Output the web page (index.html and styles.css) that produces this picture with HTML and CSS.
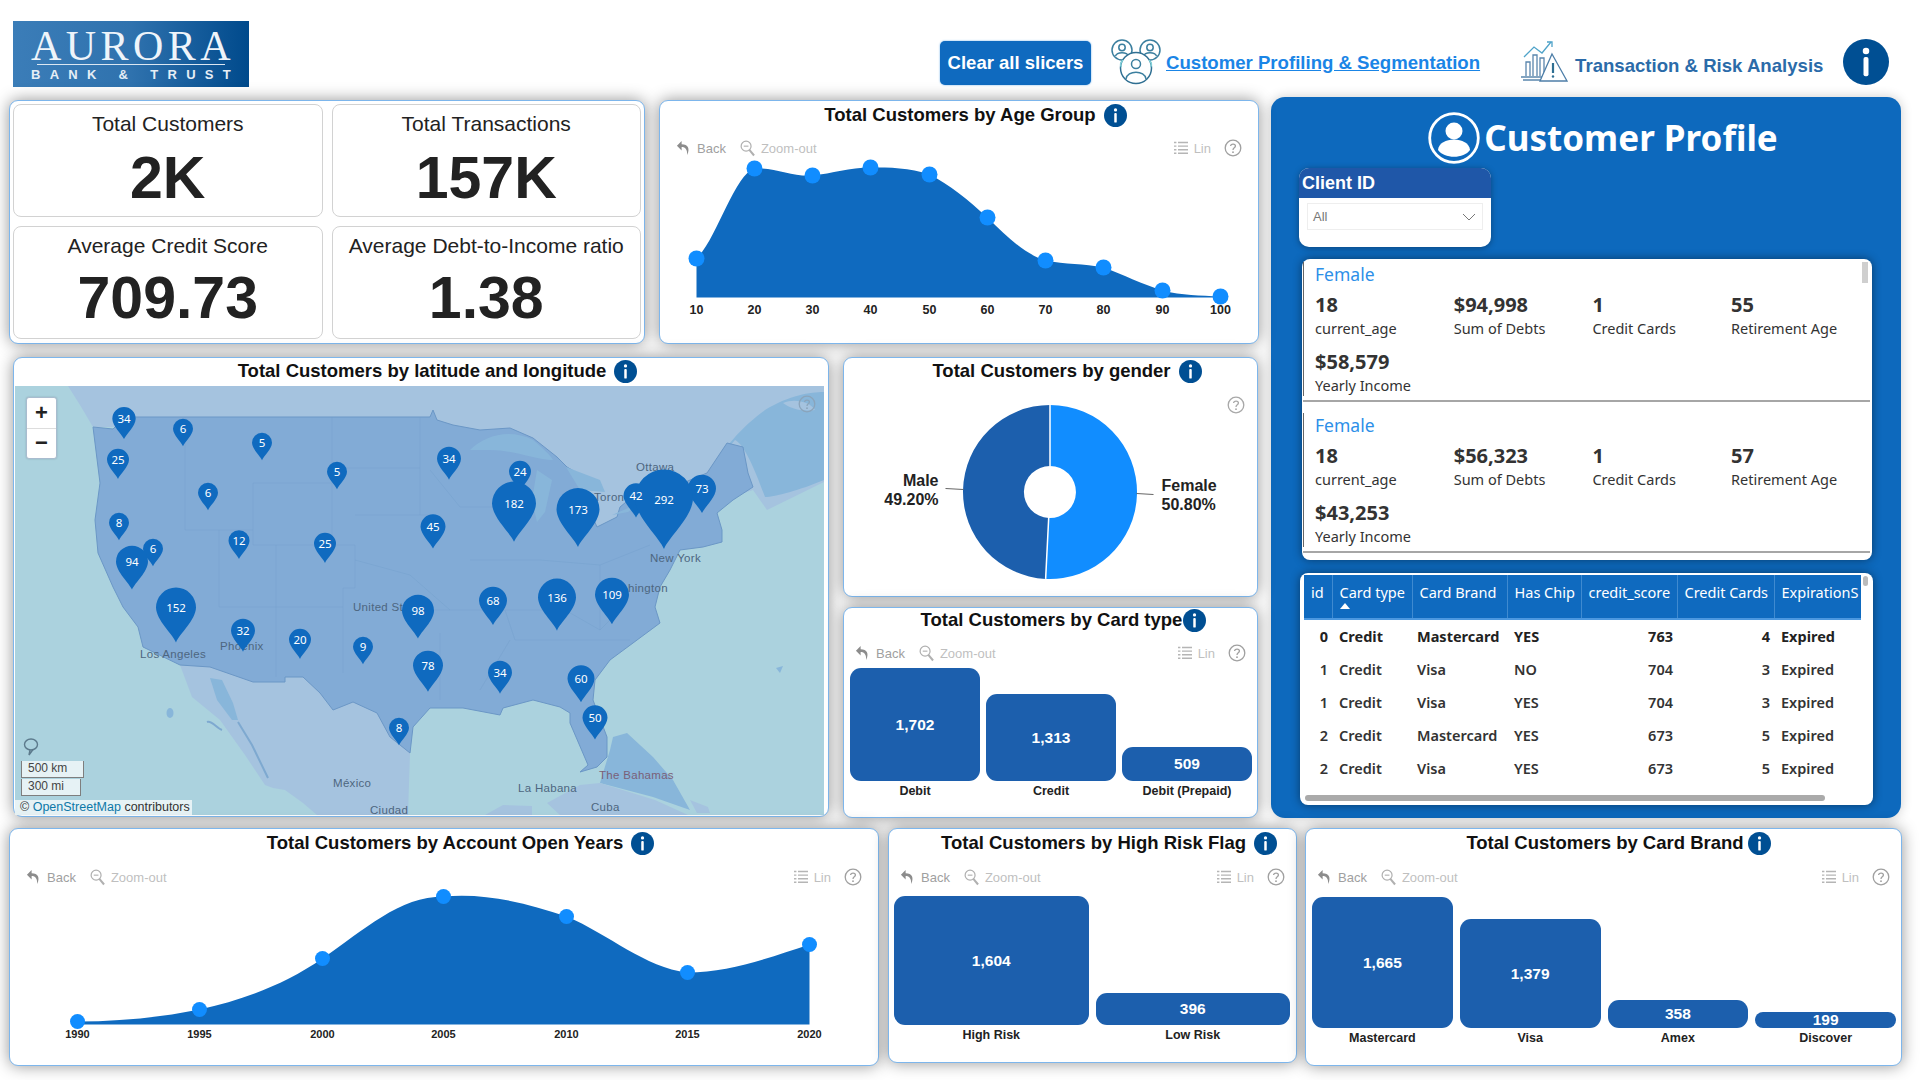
FILE: index.html
```html
<!DOCTYPE html>
<html lang="en">
<head>
<meta charset="utf-8">
<title>Aurora Bank &amp; Trust - Customer Profiling</title>
<link rel="stylesheet" href="styles.css">
</head>
<body>
<svg class="sprite" aria-hidden="true">
  <symbol id="i-back" viewBox="0 0 16 18"><path d="M6 1 L1 6 L6 11 V7.5 C10 7.5 12 10 12 16 C15 9 13 4.5 6 4.5Z" fill="currentColor"/></symbol>
  <symbol id="i-zoom" viewBox="0 0 16 18"><circle cx="6.5" cy="6.5" r="5.3" fill="none" stroke="currentColor" stroke-width="1.3"/><path d="M4 6.5H9" stroke="currentColor" stroke-width="1.2"/><path d="M10 10.5L15 16.5" stroke="currentColor" stroke-width="2.2"/></symbol>
  <symbol id="i-list" viewBox="0 0 14 16"><path d="M4 2H14M4 5.6H14M4 9.2H14M4 12.8H14" stroke="currentColor" stroke-width="1.4"/><path d="M0 2H2.4M0 5.6H2.4M0 9.2H2.4M0 12.8H2.4" stroke="currentColor" stroke-width="1.4"/></symbol>
  <symbol id="i-help" viewBox="0 0 18 18"><circle cx="9" cy="9" r="7.8" fill="none" stroke="currentColor" stroke-width="1.3"/><path d="M6.6 7C6.8 4.4 11.4 4.4 11.4 7C11.4 8.8 9 8.8 9 11" fill="none" stroke="currentColor" stroke-width="1.3"/><circle cx="9" cy="13.2" r=".9" fill="currentColor"/></symbol>
  <symbol id="i-info" viewBox="0 0 24 24"><circle cx="12" cy="12" r="12" fill="#004f93"/><circle cx="12" cy="6.2" r="1.7" fill="#fff"/><rect x="10.7" y="9.4" width="2.6" height="10" rx="1" fill="#fff"/></symbol>
  <symbol id="pin" viewBox="-1 -1 2 2.8" overflow="visible"><path d="M0 1.72 C-.18 1.3 -.98 .62 -1 -.02 A1 1 0 1 1 1 -.02 C.98 .62 .18 1.3 0 1.72Z"/></symbol>
</svg>

<div class="page">
  <header class="top">
    <div class="logo">
      <div class="logo-name">AURORA</div>
      <div class="logo-rule"></div>
      <div class="logo-sub">BANK &amp; TRUST</div>
    </div>
    <button class="clear-btn">Clear all slicers</button>
    <svg class="nav-ic-a" viewBox="0 0 51 46" fill="none" stroke="#3b7f9f" stroke-width="1.5">
      <circle cx="11" cy="11" r="10"/><circle cx="11" cy="8.5" r="3.2"/><path d="M4.5 17C6 12.5 16 12.5 17.5 17"/>
      <circle cx="39" cy="11" r="10"/><circle cx="39" cy="8.5" r="3.2"/><path d="M32.500 17C34 12.5 44 12.500 45.500 17"/>
      <circle cx="25" cy="29" r="15.500" fill="#fff" stroke="#2f6f92"/><circle cx="25" cy="25" r="4.500"/><path d="M15 40C16 31 34 31 35 40"/>
      <path d="M12 21C9 24 9 26 10.500 28M38 21C41 24 41 26 39.500 28" stroke="#7fd0d8"/>
    </svg>
    <a class="nav-link" href="#">Customer Profiling &amp; Segmentation</a>
    <svg class="nav-ic-b" viewBox="0 0 48 42" fill="none" stroke="#5a86ad" stroke-width="1.3">
      <path d="M1 37H28M3 40H28"/><path d="M6 36V22H10V36M13 36V15H17V36M20 36V18H24V36"/>
      <path d="M4 17L14 7L22 13L31 2" stroke="#4fa3c9"/><path d="M27 2H32V7" stroke="#4fa3c9"/>
      <path d="M32 14L47 41H20Z" fill="#fff" stroke="#4d7ea8"/><path d="M33 23V33" stroke="#2f6f92" stroke-width="2.200"/><circle cx="33" cy="36.500" r="1.200" fill="#2f6f92" stroke="none"/>
    </svg>
    <span class="nav-text">Transaction &amp; Risk Analysis</span>
    <svg class="nav-info"><use href="#i-info"/></svg>
  </header>

  <main class="middle">
    <div class="left">
      <div class="row-one">
        <section class="panel kpis">
          <div class="kpi"><div class="kpi-label">Total Customers</div><div class="kpi-value">2K</div></div>
          <div class="kpi"><div class="kpi-label">Total Transactions</div><div class="kpi-value">157K</div></div>
          <div class="kpi"><div class="kpi-label">Average Credit Score</div><div class="kpi-value kpi-value-low">709.73</div></div>
          <div class="kpi"><div class="kpi-label">Average Debt-to-Income ratio</div><div class="kpi-value kpi-value-low">1.38</div></div>
        </section>

        <section class="panel age">
          <h2 class="title">Total Customers by Age Group <svg class="info"><use href="#i-info"/></svg></h2>
          <div class="toolbar">
            <svg class="tb-ic tb-back"><use href="#i-back"/></svg><span class="tb-t tb-t-back">Back</span>
            <svg class="tb-ic tb-zoom"><use href="#i-zoom"/></svg><span class="tb-t">Zoom-out</span>
            <svg class="tb-ic tb-list"><use href="#i-list"/></svg><span class="tb-t">Lin</span>
            <svg class="tb-help"><use href="#i-help"/></svg>
          </div>
          <svg class="chart age-chart" viewBox="660.5 159.5 597 179">
            <path class="area" d="M697 298V259C717 240 735 175 755 169C775 168 795 178 813 176C833 174 850 168 871 168C890 168 910 168 930 175C950 185 968 200 988 218C1008 238 1026 255 1046 261C1066 265 1084 264 1104 268C1124 275 1143 285 1163 291C1183 296 1200 296 1221 297V298Z"/>
            <g class="dots"><circle cx="697" cy="259" r="8"/><circle cx="755" cy="169" r="8"/><circle cx="813" cy="176" r="8"/><circle cx="871" cy="168" r="8"/><circle cx="930" cy="175" r="8"/><circle cx="988" cy="218" r="8"/><circle cx="1046" cy="261" r="8"/><circle cx="1104" cy="268" r="8"/><circle cx="1163" cy="291" r="8"/><circle cx="1221" cy="297" r="8"/></g>
            <g class="axis"><text x="697" y="314">10</text><text x="755" y="314">20</text><text x="813" y="314">30</text><text x="871" y="314">40</text><text x="930" y="314">50</text><text x="988" y="314">60</text><text x="1046" y="314">70</text><text x="1104" y="314">80</text><text x="1163" y="314">90</text><text x="1221" y="314">100</text></g>
          </svg>
        </section>
      </div>

      <div class="row-two">
        <section class="panel map-panel">
          <h2 class="title title-up">Total Customers by latitude and longitude <svg class="info"><use href="#i-info"/></svg></h2>
          <div class="map">
            <svg class="map-svg" viewBox="15 386 809 429">
              <rect x="15" y="386" width="809" height="429" fill="#abd2de"/>
              <path class="land" d="M68 386L80 405L93 427H125L600 540L753 490L767 510L824 482V386Z"/>
              <path class="shelf" d="M710 470C730 440 745 425 765 410C790 395 810 392 824 392V480C800 490 775 497 765 497C755 470 745 445 735 440Z"/>
              <path class="lake" d="M783 403C795 398 810 402 815 410C800 412 790 408 783 403Z"/>
              <path class="land" d="M180 665L192 697L220 720L245 755L265 785L273 788L285 790L303 803L317 815H408L410 753L400 700L250 660Z"/>
              <path class="shelf" d="M210 678L222 680L233 703L238 720L232 720L217 700Z"/>
              <path class="coastline" d="M238 722L252 745L268 778M207 722C212 720 216 728 222 730"/>
              <path class="land" d="M485 815L503 805L532 806V815Z"/>
              <path class="shelf" d="M613 737L627 733L653 757L673 780L690 810L653 797L600 783L610 750Z"/>
              <path class="land" d="M547 803L580 785L600 783L655 800L688 815H560Z"/>
              <path class="land" d="M690 800L708 807L710 813H697Z"/>
              <ellipse class="shelf" cx="170" cy="713" rx="3.500" ry="5"/>
              <path class="shelf" d="M776 668L783 666L780 673Z"/>
              <path class="us" d="M93 427L113 429L125 417H430L433 410L437 420L453 425L480 430L510 428L533 438L557 457L567 467L577 473L580 488L597 527L617 517L620 507L637 493L653 483H683L707 473L727 443L743 447L748 473L753 487L733 500L717 513L722 530L722 542L703 547L680 550L670 570L660 587L655 607L660 623L633 643L610 660L595 680L593 700L607 737L607 757L597 767L580 772L588 765L570 723L570 713L560 707L533 700L503 708L500 715L463 708L440 708H430L413 727L410 753L390 737L377 713L353 702L333 710L320 693L303 677H285V682H253L210 667L180 665L143 647L138 627L123 607L113 587L98 553L95 520L100 483Z"/>
              <path class="shelf" d="M470 450C485 435 510 428 533 440C545 450 550 455 553 460C535 460 515 450 490 450Z"/>
              <path class="shelf" d="M537 470L552 480L545 512L537 522L532 500Z"/>
              <path class="shelf" d="M566 467L600 480L605 492L580 490Z"/>
              <path class="shelf" d="M612 515L640 503L628 512Z"/>
              <path class="states" d="M185 417V530H253M253 483H332V417M253 483V545H355V588H343V673M219 530V607H343M276 545V677M332 483V545M333 468H420M355 515H430M355 560L410 575L450 610M420 417V515M430 470L460 507L520 507M470 560H540M540 560L600 565L650 545M430 610H565M515 640H630M510 640L480 690M440 633V700M505 610L515 640M600 565L600 630M565 610L600 630L620 610"/>
              <text class="place" x="140" y="658">Los Angeles</text>
              <text class="place" x="220" y="650">Phoenix</text>
              <text class="place" x="353" y="611">United St</text>
              <text class="place" x="636" y="471">Ottawa</text>
              <text class="place" x="594" y="501">Toron</text>
              <text class="place" x="650" y="562">New York</text>
              <text class="place" x="628" y="592">hington</text>
              <text class="place" x="333" y="787">México</text>
              <text class="place" x="370" y="814">Ciudad</text>
              <text class="place" x="518" y="792">La Habana</text>
              <text class="place place-red" x="599" y="779">The Bahamas</text>
              <text class="place" x="591" y="811">Cuba</text>
              <g class="pins">
                <use href="#pin" x="-1" y="-1" width="2" height="2.800" transform="translate(124 419) scale(11.700)"/><text x="124" y="423">34</text>
                <use href="#pin" x="-1" y="-1" width="2" height="2.800" transform="translate(183 429) scale(10)"/><text x="183" y="433">6</text>
                <use href="#pin" x="-1" y="-1" width="2" height="2.800" transform="translate(262 443) scale(10)"/><text x="262" y="447">5</text>
                <use href="#pin" x="-1" y="-1" width="2" height="2.800" transform="translate(337 472) scale(10)"/><text x="337" y="476">5</text>
                <use href="#pin" x="-1" y="-1" width="2" height="2.800" transform="translate(118 460) scale(11)"/><text x="118" y="464">25</text>
                <use href="#pin" x="-1" y="-1" width="2" height="2.800" transform="translate(208 493) scale(10)"/><text x="208" y="497">6</text>
                <use href="#pin" x="-1" y="-1" width="2" height="2.800" transform="translate(119 523) scale(10)"/><text x="119" y="527">8</text>
                <use href="#pin" x="-1" y="-1" width="2" height="2.800" transform="translate(239 541) scale(10.500)"/><text x="239" y="545">12</text>
                <use href="#pin" x="-1" y="-1" width="2" height="2.800" transform="translate(325 544) scale(11)"/><text x="325" y="548">25</text>
                <use href="#pin" x="-1" y="-1" width="2" height="2.800" transform="translate(153 549) scale(10)"/><text x="153" y="553">6</text>
                <use href="#pin" x="-1" y="-1" width="2" height="2.800" transform="translate(132 562) scale(16)"/><text x="132" y="566">94</text>
                <use href="#pin" x="-1" y="-1" width="2" height="2.800" transform="translate(176 608) scale(20)"/><text x="176" y="612">152</text>
                <use href="#pin" x="-1" y="-1" width="2" height="2.800" transform="translate(243 631) scale(12)"/><text x="243" y="635">32</text>
                <use href="#pin" x="-1" y="-1" width="2" height="2.800" transform="translate(300 640) scale(11)"/><text x="300" y="644">20</text>
                <use href="#pin" x="-1" y="-1" width="2" height="2.800" transform="translate(363 647) scale(10)"/><text x="363" y="651">9</text>
                <use href="#pin" x="-1" y="-1" width="2" height="2.800" transform="translate(418 611) scale(16)"/><text x="418" y="615">98</text>
                <use href="#pin" x="-1" y="-1" width="2" height="2.800" transform="translate(399 728) scale(10)"/><text x="399" y="732">8</text>
                <use href="#pin" x="-1" y="-1" width="2" height="2.800" transform="translate(428 666) scale(15)"/><text x="428" y="670">78</text>
                <use href="#pin" x="-1" y="-1" width="2" height="2.800" transform="translate(449 459) scale(12)"/><text x="449" y="463">34</text>
                <use href="#pin" x="-1" y="-1" width="2" height="2.800" transform="translate(433 527) scale(12.500)"/><text x="433" y="531">45</text>
                <use href="#pin" x="-1" y="-1" width="2" height="2.800" transform="translate(520 472) scale(11)"/><text x="520" y="476">24</text>
                <use href="#pin" x="-1" y="-1" width="2" height="2.800" transform="translate(514 504) scale(22)"/><text x="514" y="508">182</text>
                <use href="#pin" x="-1" y="-1" width="2" height="2.800" transform="translate(578 510) scale(21.500)"/><text x="578" y="514">173</text>
                <use href="#pin" x="-1" y="-1" width="2" height="2.800" transform="translate(636 496) scale(12.500)"/>
                <use href="#pin" x="-1" y="-1" width="2" height="2.800" transform="translate(702 489) scale(14)"/><text x="702" y="493">73</text>
                <use href="#pin" x="-1" y="-1" width="2" height="2.800" transform="translate(664 499) scale(29)"/><text x="664" y="504">292</text>
                <text x="636" y="500">42</text>
                <use href="#pin" x="-1" y="-1" width="2" height="2.800" transform="translate(493 601) scale(14)"/><text x="493" y="605">68</text>
                <use href="#pin" x="-1" y="-1" width="2" height="2.800" transform="translate(557 598) scale(19)"/><text x="557" y="602">136</text>
                <use href="#pin" x="-1" y="-1" width="2" height="2.800" transform="translate(612 595) scale(17)"/><text x="612" y="599">109</text>
                <use href="#pin" x="-1" y="-1" width="2" height="2.800" transform="translate(500 673) scale(12)"/><text x="500" y="677">34</text>
                <use href="#pin" x="-1" y="-1" width="2" height="2.800" transform="translate(581 679) scale(13.500)"/><text x="581" y="683">60</text>
                <use href="#pin" x="-1" y="-1" width="2" height="2.800" transform="translate(595 718) scale(12.500)"/><text x="595" y="722">50</text>
              </g>
            </svg>
            <div class="zoom-ctl"><span>+</span><span>−</span></div>
            <svg class="map-help"><use href="#i-help"/></svg>
            <svg class="scale-pin" viewBox="0 0 16 18" fill="none" stroke="#5c7a8c" stroke-width="1.400"><ellipse cx="8" cy="6.500" rx="6.500" ry="5.500"/><path d="M7 12L6 17L10 11.500"/></svg>
            <div class="scale">
              <div class="scale-km">500 km</div>
              <div class="scale-mi">300 mi</div>
            </div>
            <div class="attrib">© <span class="osm">OpenStreetMap</span> contributors</div>
          </div>
        </section>

        <div class="right-col">
          <section class="panel gender">
            <h2 class="title title-up">Total Customers by gender <svg class="info"><use href="#i-info"/></svg></h2>
            <svg class="chart gender-chart" viewBox="844.5 385.5 412 210">
              <path fill="#1c5fad" d="M1050.500 404.500A87 87 0 0 0 1046.130 578.390L1049.190 517.470A26 26 0 0 1 1050.500 465.500Z"/>
              <path fill="#118dff" d="M1050.500 404.500A87 87 0 1 1 1046.130 578.390L1049.190 517.470A26 26 0 1 0 1050.500 465.500Z"/>
              <path d="M1050.500 404.500V465.500M1049.190 517.470L1046.130 578.390" stroke="#fff" stroke-width="1.500"/>
              <path d="M946 488L964 489M1137 493L1154 494" stroke="#666" stroke-width="1"/>
              <g class="pie-label">
                <text x="939" y="485" text-anchor="end">Male</text>
                <text x="939" y="504" text-anchor="end">49.20%</text>
                <text x="1162" y="490">Female</text>
                <text x="1162" y="509">50.80%</text>
              </g>
            </svg>
            <svg class="gender-help"><use href="#i-help"/></svg>
          </section>

          <section class="panel cardtype">
            <h2 class="title title-tight">Total Customers by Card type <svg class="info"><use href="#i-info"/></svg></h2>
            <div class="toolbar toolbar-wide">
              <svg class="tb-ic tb-back"><use href="#i-back"/></svg><span class="tb-t tb-t-back">Back</span>
              <svg class="tb-ic tb-zoom"><use href="#i-zoom"/></svg><span class="tb-t">Zoom-out</span>
              <svg class="tb-ic tb-list"><use href="#i-list"/></svg><span class="tb-t">Lin</span>
              <svg class="tb-help"><use href="#i-help"/></svg>
            </div>
            <div class="bars bars-type">
              <div class="col"><div class="bar" style="height:113px">1,702</div><div class="bar-name">Debit</div></div>
              <div class="col"><div class="bar" style="height:87px">1,313</div><div class="bar-name">Credit</div></div>
              <div class="col"><div class="bar" style="height:34px">509</div><div class="bar-name">Debit (Prepaid)</div></div>
            </div>
          </section>
        </div>
      </div>
    </div>

    <aside class="profile">
      <div class="profile-head">
        <svg class="profile-ic" viewBox="0 0 52 52"><circle cx="26" cy="26" r="24.300" fill="none" stroke="#fff" stroke-width="2.800"/><circle cx="26" cy="19" r="8.500" fill="#fff"/><path d="M10 38C11 24 41 24 42 38C36 47 16 47 10 38Z" fill="#fff"/></svg>
        <h1 class="profile-title">Customer Profile</h1>
      </div>
      <div class="slicer">
        <div class="slicer-head">Client ID</div>
        <div class="slicer-box"><span>All</span><svg class="chev" viewBox="0 0 14 8" fill="none" stroke="#777" stroke-width="1"><path d="M1 1L7 7L13 1"/></svg></div>
      </div>
      <div class="cards">
        <div class="thumb-v"></div>
        <div class="item">
          <div class="item-body">
            <div class="who">Female</div>
            <div class="stats">
              <div class="stat"><b>18</b><span>current_age</span></div>
              <div class="stat"><b>$94,998</b><span>Sum of Debts</span></div>
              <div class="stat"><b>1</b><span>Credit Cards</span></div>
              <div class="stat"><b>55</b><span>Retirement Age</span></div>
              <div class="stat"><b>$58,579</b><span>Yearly Income</span></div>
            </div>
          </div>
        </div>
        <div class="item">
          <div class="item-body">
            <div class="who">Female</div>
            <div class="stats">
              <div class="stat"><b>18</b><span>current_age</span></div>
              <div class="stat"><b>$56,323</b><span>Sum of Debts</span></div>
              <div class="stat"><b>1</b><span>Credit Cards</span></div>
              <div class="stat"><b>57</b><span>Retirement Age</span></div>
              <div class="stat"><b>$43,253</b><span>Yearly Income</span></div>
            </div>
          </div>
        </div>
      </div>
      <div class="table-box">
        <table class="tbl">
          <colgroup><col class="c1"><col class="c2"><col class="c3"><col class="c4"><col class="c5"><col class="c6"><col class="c7"></colgroup>
          <thead><tr><th class="h-id">id</th><th class="sorted">Card type</th><th>Card Brand</th><th>Has Chip</th><th>credit_score</th><th>Credit Cards</th><th>ExpirationS</th></tr></thead>
          <tbody>
            <tr class="strong"><td class="num">0</td><td>Credit</td><td class="brand">Mastercard</td><td>YES</td><td class="num">763</td><td class="num">4</td><td>Expired</td></tr>
            <tr><td class="num">1</td><td>Credit</td><td class="brand">Visa</td><td>NO</td><td class="num">704</td><td class="num">3</td><td>Expired</td></tr>
            <tr><td class="num">1</td><td>Credit</td><td class="brand">Visa</td><td>YES</td><td class="num">704</td><td class="num">3</td><td>Expired</td></tr>
            <tr><td class="num">2</td><td>Credit</td><td class="brand">Mastercard</td><td>YES</td><td class="num">673</td><td class="num">5</td><td>Expired</td></tr>
            <tr><td class="num">2</td><td>Credit</td><td class="brand">Visa</td><td>YES</td><td class="num">673</td><td class="num">5</td><td>Expired</td></tr>
          </tbody>
        </table>
        <div class="thumb-tv"></div>
        <div class="thumb-h"></div>
      </div>
    </aside>
  </main>

  <footer class="bottom">
    <section class="panel years">
      <h2 class="title">Total Customers by Account Open Years <svg class="info"><use href="#i-info"/></svg></h2>
      <div class="toolbar toolbar-sm">
        <svg class="tb-ic tb-back"><use href="#i-back"/></svg><span class="tb-t tb-t-back">Back</span>
        <svg class="tb-ic tb-zoom"><use href="#i-zoom"/></svg><span class="tb-t">Zoom-out</span>
        <svg class="tb-ic tb-list"><use href="#i-list"/></svg><span class="tb-t">Lin</span>
        <svg class="tb-help"><use href="#i-help"/></svg>
      </div>
      <svg class="chart years-chart" viewBox="10.5 888.5 867 176">
        <path class="area" d="M78 1025V1022C120 1022 160 1018 200 1010C245 1000 285 985 323 959C365 930 400 897 444 897C490 893 530 905 567 917C610 935 645 968 688 973C730 973 770 958 810 945V1025Z"/>
        <g class="dots"><circle cx="78" cy="1022" r="7.500"/><circle cx="200" cy="1010" r="7.500"/><circle cx="323" cy="959" r="7.500"/><circle cx="444" cy="897" r="7.500"/><circle cx="567" cy="917" r="7.500"/><circle cx="688" cy="973" r="7.500"/><circle cx="810" cy="945" r="7.500"/></g>
        <g class="axis axis-sm"><text x="78" y="1038">1990</text><text x="200" y="1038">1995</text><text x="323" y="1038">2000</text><text x="444" y="1038">2005</text><text x="567" y="1038">2010</text><text x="688" y="1038">2015</text><text x="810" y="1038">2020</text></g>
      </svg>
    </section>

    <section class="panel risk">
      <h2 class="title">Total Customers by High Risk Flag <svg class="info"><use href="#i-info"/></svg></h2>
      <div class="toolbar toolbar-sm toolbar-wide">
        <svg class="tb-ic tb-back"><use href="#i-back"/></svg><span class="tb-t tb-t-back">Back</span>
        <svg class="tb-ic tb-zoom"><use href="#i-zoom"/></svg><span class="tb-t">Zoom-out</span>
        <svg class="tb-ic tb-list"><use href="#i-list"/></svg><span class="tb-t">Lin</span>
        <svg class="tb-help"><use href="#i-help"/></svg>
      </div>
      <div class="bars bars-risk">
        <div class="col"><div class="bar" style="height:129px">1,604</div><div class="bar-name">High Risk</div></div>
        <div class="col"><div class="bar" style="height:32px">396</div><div class="bar-name">Low Risk</div></div>
      </div>
    </section>

    <section class="panel brand-panel">
      <h2 class="title title-snug">Total Customers by Card Brand <svg class="info"><use href="#i-info"/></svg></h2>
      <div class="toolbar toolbar-sm toolbar-wide">
        <svg class="tb-ic tb-back"><use href="#i-back"/></svg><span class="tb-t tb-t-back">Back</span>
        <svg class="tb-ic tb-zoom"><use href="#i-zoom"/></svg><span class="tb-t">Zoom-out</span>
        <svg class="tb-ic tb-list"><use href="#i-list"/></svg><span class="tb-t">Lin</span>
        <svg class="tb-help"><use href="#i-help"/></svg>
      </div>
      <div class="bars bars-brand">
        <div class="col"><div class="bar" style="height:131px">1,665</div><div class="bar-name">Mastercard</div></div>
        <div class="col"><div class="bar" style="height:109px">1,379</div><div class="bar-name">Visa</div></div>
        <div class="col"><div class="bar" style="height:28px">358</div><div class="bar-name">Amex</div></div>
        <div class="col"><div class="bar" style="height:16px">199</div><div class="bar-name">Discover</div></div>
      </div>
    </section>
  </footer>
</div>
</body>
</html>
```

FILE: styles.css
```css
* { box-sizing: border-box; }
html, body { margin: 0; padding: 0; background: #fff; }
body { font-family: "Liberation Sans", Arial, sans-serif; color: #222; }
.sprite { width: 0; height: 0; position: absolute; }
.page { width: 1920px; height: 1080px; overflow: hidden; background: #fff; }

/* Header */
.top { display: flex; align-items: flex-start; height: 97px; padding-left: 13px; }
.logo { width: 236px; height: 66px; margin-top: 21px; background: linear-gradient(90deg, #3b7db8 0%, #2f72ae 50%, #004a8c 100%); color: #fff; display: flex; flex-direction: column; align-items: center; padding-top: 8px; }
.logo-name { font-family: "Liberation Serif", serif; font-size: 42px; line-height: 34px; letter-spacing: 4.400px; margin-right: -4px; color: #eef4fa; }
.logo-rule { width: 188px; height: 1px; background: #dbe7f2; margin-top: 1px; }
.logo-sub { font-size: 13px; font-weight: 700; letter-spacing: 9.300px; line-height: 16px; margin-top: 2px; margin-right: -9px; color: #e6eef6; white-space: nowrap; }
.clear-btn { width: 151px; height: 44px; margin: 41px 0 0 691px; background: #0f6abf; color: #fff; border: 0; border-radius: 5px; font: 700 18.500px/44px "Liberation Sans", Arial, sans-serif; padding: 0; box-shadow: 0 0 2px #5fa6e6; }
.nav-ic-a { width: 51px; height: 46px; margin: 39px 0 0 20px; flex: none; }
.nav-link { margin: 51px 0 0 4px; color: #1a85e6; font-size: 18.600px; font-weight: 700; line-height: 24px; text-decoration: underline; white-space: nowrap; }
.nav-ic-b { width: 48px; height: 42px; margin: 40px 0 0 40px; flex: none; }
.nav-text { margin: 54px 0 0 7px; color: #2b6ba9; font-size: 18.600px; font-weight: 700; line-height: 24px; white-space: nowrap; }
.nav-info { width: 46px; height: 46px; margin: 39px 0 0 20px; flex: none; }

/* Generic panel */
.panel { background: #fff; border: 1.500px solid #7db6ec; border-radius: 9px; box-shadow: 0 0 16px rgba(0, 0, 0, .42); position: relative; }
.title { margin: 0; height: 28px; display: flex; align-items: center; justify-content: center; gap: 8px; padding-left: 33px; font-size: 18.500px; font-weight: 700; color: #111; white-space: nowrap; }
.title-up { margin-top: -1px; margin-bottom: 1px; }
.title-tight { gap: 1px; padding-left: 26px; margin-top: -2px; margin-bottom: 1px; }
.title-snug { gap: 4px; padding-left: 30px; }
.info { width: 23px; height: 23px; flex: none; }
.toolbar { height: 22px; margin-top: 8px; display: flex; align-items: center; padding: 0 16px; color: #c4c4c4; font-size: 13px; }
.toolbar-sm { margin-top: 9px; }
.toolbar-wide { padding: 0 11px; }
.tb-ic { width: 15px; height: 17px; flex: none; }
.tb-back { color: #8c8c8c; }
.tb-zoom { color: #b0b0b0; margin-left: 14px; }
.tb-list { color: #b5b5b5; margin-left: auto; width: 14px; }
.tb-t { margin-left: 6px; color: #bfbfbf; }
.tb-t-back { color: #a0a0a0; }
.tb-help { width: 18px; height: 18px; color: #a0a0a0; margin-left: 13px; flex: none; }
.chart { display: block; }
.area { fill: #0f6abf; }
.dots circle { fill: #118dff; }
.axis text { font: 700 12.500px "Liberation Sans", Arial, sans-serif; fill: #222; text-anchor: middle; }
.axis-sm text { font-size: 11px; }

/* Middle region */
.middle { display: flex; padding-left: 9px; }
.left { width: 1250px; flex: none; padding-top: 3px; }
.row-one { display: flex; gap: 14px; }
.kpis { width: 636px; height: 244px; display: grid; grid-template-columns: 1fr 1fr; grid-template-rows: 113px 113px; gap: 9px 9px; padding: 3px 3px; }
.kpi { border: 1px solid #d2d2d2; border-radius: 8px; display: flex; flex-direction: column; align-items: center; overflow: hidden; }
.kpi-label { font-size: 21px; line-height: 24px; margin-top: 7px; color: #222; white-space: nowrap; }
.kpi-value { font-size: 59px; font-weight: 700; line-height: 60px; margin-top: 12px; color: #222; }
.kpi-value-low { margin-top: 10px; }
.age { width: 600px; height: 244px; }
.age-chart { width: 597px; height: 179px; }
.row-two { display: flex; gap: 14px; margin-top: 13px; padding-left: 4px; }
.map-panel { width: 816px; height: 460px; overflow: visible; }
.map { position: relative; width: 809px; height: 429px; margin-left: 1px; overflow: hidden; }
.map-svg { display: block; width: 809px; height: 429px; }
.land { fill: #a5c3df; }
.shelf { fill: #88b6da; }
.lake { fill: #a5c3df; }
.coastline { fill: none; stroke: #7ea9d0; stroke-width: 2; }
.us { fill: #82abd6; stroke: #6b97c6; stroke-width: 1; }
.states { fill: none; stroke: #6f9ccb; stroke-width: .8; opacity: .45; }
.place { font: 11.500px "Liberation Sans", Arial, sans-serif; letter-spacing: .3px; fill: #4d6680; }
.place-red { fill: #7a5f78; }
.pins use { fill: #0f6abf; }
.pins text { font: 11.500px "Noto Sans", sans-serif; fill: #fff; text-anchor: middle; }
.zoom-ctl { position: absolute; left: 11px; top: 11px; width: 31px; height: 62px; background: #fff; border: 1px solid #a9bccf; border-radius: 3px; display: flex; flex-direction: column; box-shadow: 0 0 2px rgba(0,0,0,.2); }
.zoom-ctl span { flex: 1; display: flex; align-items: center; justify-content: center; font: 700 22px "Liberation Sans", Arial, sans-serif; color: #222; }
.zoom-ctl span:first-child { border-bottom: 1px solid #ddd; }
.map-help { position: absolute; right: 8px; top: 9px; width: 18px; height: 18px; color: #8aa4bb; }
.scale-pin { position: absolute; left: 8px; top: 352px; width: 16px; height: 18px; }
.scale { position: absolute; left: 6px; top: 375px; font-size: 12px; color: #444; }
.scale-km, .scale-mi { height: 17px; line-height: 15px; padding-left: 6px; background: rgba(255,255,255,.7); border: 1px solid #7e7e7e; border-top: 0; border-right-width: 1px; }
.scale-km { width: 63px; }
.scale-mi { width: 60px; margin-top: 1px; }
.attrib { position: absolute; left: 0; bottom: 0; width: 177px; height: 15px; line-height: 15px; padding-left: 5px; background: rgba(255,255,255,.7); font-size: 12.500px; color: #333; white-space: nowrap; }
.osm { color: #0d78a8; }
.right-col { width: 415px; flex: none; display: flex; flex-direction: column; gap: 10px; }
.gender { height: 240px; }
.gender-chart { width: 412px; height: 210px; }
.pie-label text { font: 700 16px "Liberation Sans", Arial, sans-serif; fill: #222; }
.gender-help { position: absolute; right: 12px; top: 38px; width: 18px; height: 18px; color: #a8a8a8; }
.cardtype { height: 211px; }

/* Bars */
.bars { display: flex; align-items: flex-end; }
.col { flex: 1 1 0; display: flex; flex-direction: column; min-width: 0; }
.bar { background: #1c5fad; border-radius: 11px; color: #fff; font-weight: 700; font-size: 15.500px; display: flex; align-items: center; justify-content: center; overflow: hidden; }
.bar-name { height: 20px; line-height: 20px; text-align: center; font-size: 12.500px; font-weight: 700; color: #222; white-space: nowrap; }
.bars-type { height: 130px; gap: 6px; padding: 0 5px 0 6px; margin-top: 7px; }
.bars-risk { height: 155px; gap: 7px; padding: 0 6px 0 5px; margin-top: 2px; }
.bars-brand { height: 158px; gap: 7px; padding: 0 5px 0 6px; margin-top: 2px; }

/* Profile */
.profile { width: 630px; height: 721px; margin-left: 12px; background: #0d69bd; border-radius: 14px; flex: none; display: flex; flex-direction: column; box-shadow: 0 0 12px rgba(0,0,0,.2); }
.profile-head { height: 71px; display: flex; align-items: flex-start; justify-content: center; padding: 15px 0 0 34px; gap: 4px; }
.profile-ic { width: 52px; height: 52px; flex: none; }
.profile-title { margin: 0; font: 700 35px/52px "Noto Sans", sans-serif; color: #fff; white-space: nowrap; }
.slicer { width: 192px; height: 79px; margin-left: 28px; background: #fff; border-radius: 10px; overflow: hidden; box-shadow: 0 1px 6px rgba(0,0,0,.35); flex: none; }
.slicer-head { height: 30px; background: #1f57a8; color: #fff; font-size: 18px; font-weight: 700; line-height: 30px; padding-left: 3px; }
.slicer-box { height: 27px; margin: 5px 8px 0; border: 1px solid #eee; display: flex; align-items: center; justify-content: space-between; padding: 0 6px 0 5px; font-size: 13px; color: #777; }
.chev { width: 14px; height: 8px; }
.cards { position: relative; width: 570px; height: 301px; margin: 12px 0 0 31px; padding-top: 3px; background: #fff; border-radius: 8px; box-shadow: 0 0 10px rgba(0,0,0,.45); flex: none; }
.thumb-v { position: absolute; right: 4px; top: 3px; width: 6px; height: 21px; background: #cfcfcf; }
.item { margin-left: 1px; margin-right: 2px; height: 140px; border-bottom: 2px solid #a6a6a6; }
.item + .item { margin-top: 11px; }
.item-body { height: 134px; border-left: 1px solid #666; padding-left: 11px; }
.who { font: 17.500px/24px "Noto Sans", sans-serif; color: #2d8fe8; }
.stats { display: grid; grid-template-columns: repeat(4, 138.700px); row-gap: 11px; margin-top: 7px; }
.stat { display: flex; flex-direction: column; font-family: "Noto Sans", sans-serif; }
.stat b { font-size: 20px; line-height: 24px; font-weight: 700; color: #333; }
.stat span { font-size: 14.500px; line-height: 22px; color: #333; white-space: nowrap; }
.table-box { position: relative; width: 573px; height: 232px; margin: 13px 0 0 29px; background: #fff; border-radius: 8px; box-shadow: 0 0 10px rgba(0,0,0,.45); padding: 2px 0 0 4px; flex: none; overflow: hidden; }
.tbl { border-collapse: collapse; table-layout: fixed; width: 557px; font-family: "Noto Sans", sans-serif; font-size: 14.500px; }
.c1 { width: 28px; } .c2 { width: 80px; } .c3 { width: 95px; } .c4 { width: 74px; } .c5 { width: 96px; } .c6 { width: 97px; } .c7 { width: 87px; }
.tbl th { height: 44px; background: #0f6abf; color: #fff; font-weight: 400; text-align: left; vertical-align: top; padding: 5px 0 0 7px; line-height: 24px; border-right: 1px solid #3f8ad0; border-bottom: 2px solid #4c98e0; white-space: nowrap; overflow: hidden; position: relative; }
.tbl th:last-child { border-right: 0; }
.tbl .h-id { padding-left: 7px; }
.sorted::after { content: ""; position: absolute; left: 7px; top: 28px; border: 5px solid transparent; border-top: 0; border-bottom: 6px solid #fff; }
.tbl td { height: 33px; padding: 0 0 0 7px; color: #333; font-weight: 600; white-space: nowrap; overflow: hidden; }
.tbl .strong td { font-weight: 700; color: #222; }
.tbl td.brand { padding-left: 5px; }
.tbl td.num { text-align: right; padding: 0 4px 0 0; }
.thumb-tv { position: absolute; right: 5px; top: 3px; width: 5px; height: 10px; border-radius: 3px; background: #bbb; }
.thumb-h { position: absolute; left: 5px; top: 222px; width: 520px; height: 6px; border-radius: 3px; background: #aaa; }

/* Bottom row */
.bottom { display: flex; align-items: flex-start; padding-left: 9px; margin-top: 10px; }
.years { width: 870px; height: 238px; }
.years-chart { width: 867px; height: 176px; }
.risk { width: 409px; height: 235px; margin-left: 9px; }
.brand-panel { width: 597px; height: 238px; margin-left: 8px; }
```
